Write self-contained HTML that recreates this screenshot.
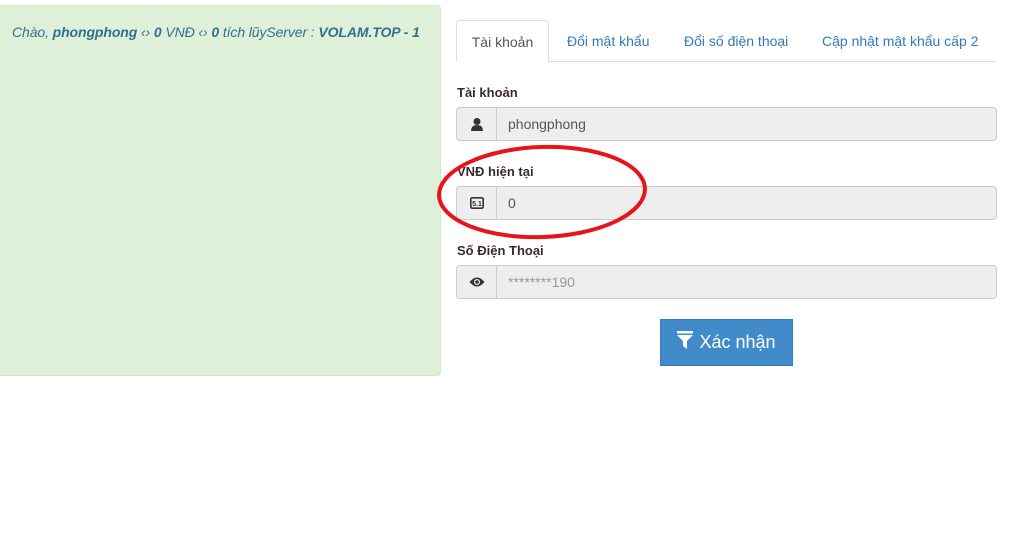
<!DOCTYPE html>
<html><head><meta charset="utf-8"><style>
body{margin:0;width:1024px;height:560px;background:#fff;font-family:"Liberation Sans",sans-serif;position:relative;overflow:hidden}
.green{position:absolute;left:-5px;top:5px;width:446px;height:371px;background:#dff0d8;border:1px solid #d0e9c6;border-radius:4px;box-sizing:border-box}
.green p{margin:0;position:absolute;left:16px;top:18px;font-size:14px;font-style:italic;color:#31708f;letter-spacing:-0.1px}
.tabs{position:absolute;left:456px;top:20px;width:540px;height:42px;border-bottom:1px solid #ddd;box-sizing:border-box}
.tab{position:absolute;top:0;height:42px;line-height:42px;font-size:14px;color:#337ab7}
.tab.a{left:0;width:93px;border:1px solid #ddd;border-bottom-color:#fff;border-radius:4px 4px 0 0;color:#555;text-align:center;box-sizing:border-box;background:#fff}
.lbl{position:absolute;left:457px;font-size:13px;font-weight:bold;color:#3a2a2a}
.inp{position:absolute;left:456px;width:541px;height:34px;border:1px solid #ccc;border-radius:4px;background:#eee;box-sizing:border-box;font-size:14px;color:#555}
.inp .ad{position:absolute;left:0;top:0;width:39px;height:32px;border-right:1px solid #ccc;display:flex;align-items:center;justify-content:center}
.inp .v{position:absolute;left:51px;top:8px}
.btn{position:absolute;left:660px;top:319px;width:133px;height:47px;background:#428bca;border:1px solid #357ebd;box-sizing:border-box;color:#fff;font-size:18px;line-height:44px;text-align:center}
</style></head><body>
<div class="green"><p>Chào, <b>phongphong</b> ‹› <b>0</b> VNĐ ‹› <b>0</b> tích lũyServer : <b>VOLAM.TOP - 1</b></p></div>
<div class="tabs">
<div class="tab a">Tài khoản</div>
<div class="tab" style="left:111px">Đổi mật khẩu</div>
<div class="tab" style="left:228px">Đổi số điện thoại</div>
<div class="tab" style="left:366px">Cập nhật mật khẩu cấp 2</div>
</div>
<div class="lbl" style="top:85px">Tài khoản</div>
<div class="inp" style="top:107px"><div class="ad"><svg width="14" height="14" viewBox="0 0 14 14"><circle cx="7" cy="4.5" r="3.5" fill="#333"/><path d="M1 14 Q1 8 7 8 Q13 8 13 14Z" fill="#333"/></svg></div><span class="v">phongphong</span></div>
<div class="lbl" style="top:164px">VNĐ hiện tại</div>
<div class="inp" style="top:186px"><div class="ad"><svg width="14" height="12" viewBox="0 0 14 12"><rect x="0.8" y="0.8" width="12.4" height="10.4" rx="1.5" fill="none" stroke="#333" stroke-width="1.6"/><text x="7" y="9" font-size="7" font-weight="bold" text-anchor="middle" fill="#333" font-family="Liberation Sans">5.1</text></svg></div><span class="v">0</span></div>
<div class="lbl" style="top:243px">Số Điện Thoại</div>
<div class="inp" style="top:265px"><div class="ad"><svg width="16" height="12" viewBox="0 0 16 12"><path d="M0.5 6 Q8 -3 15.5 6 Q8 15 0.5 6Z" fill="#333"/><circle cx="8" cy="6" r="3" fill="#eee"/><circle cx="8" cy="6" r="1.8" fill="#333"/></svg></div><span class="v" style="color:#999">********190</span></div>
<div class="btn"><svg width="16" height="18" viewBox="0 0 16 18" style="vertical-align:-1px;margin-right:6px"><rect x="0" y="0" width="16" height="2.5" fill="#fff"/><path d="M0 4 H16 L10 10 V18 L6 15 V10Z" fill="#fff"/></svg>Xác nhận</div>
<svg style="position:absolute;left:0;top:0" width="1024" height="560"><ellipse cx="542" cy="192" rx="103" ry="45" fill="none" stroke="#e8141c" stroke-width="4" transform="rotate(-2 542 192)"/></svg>
</body></html>
